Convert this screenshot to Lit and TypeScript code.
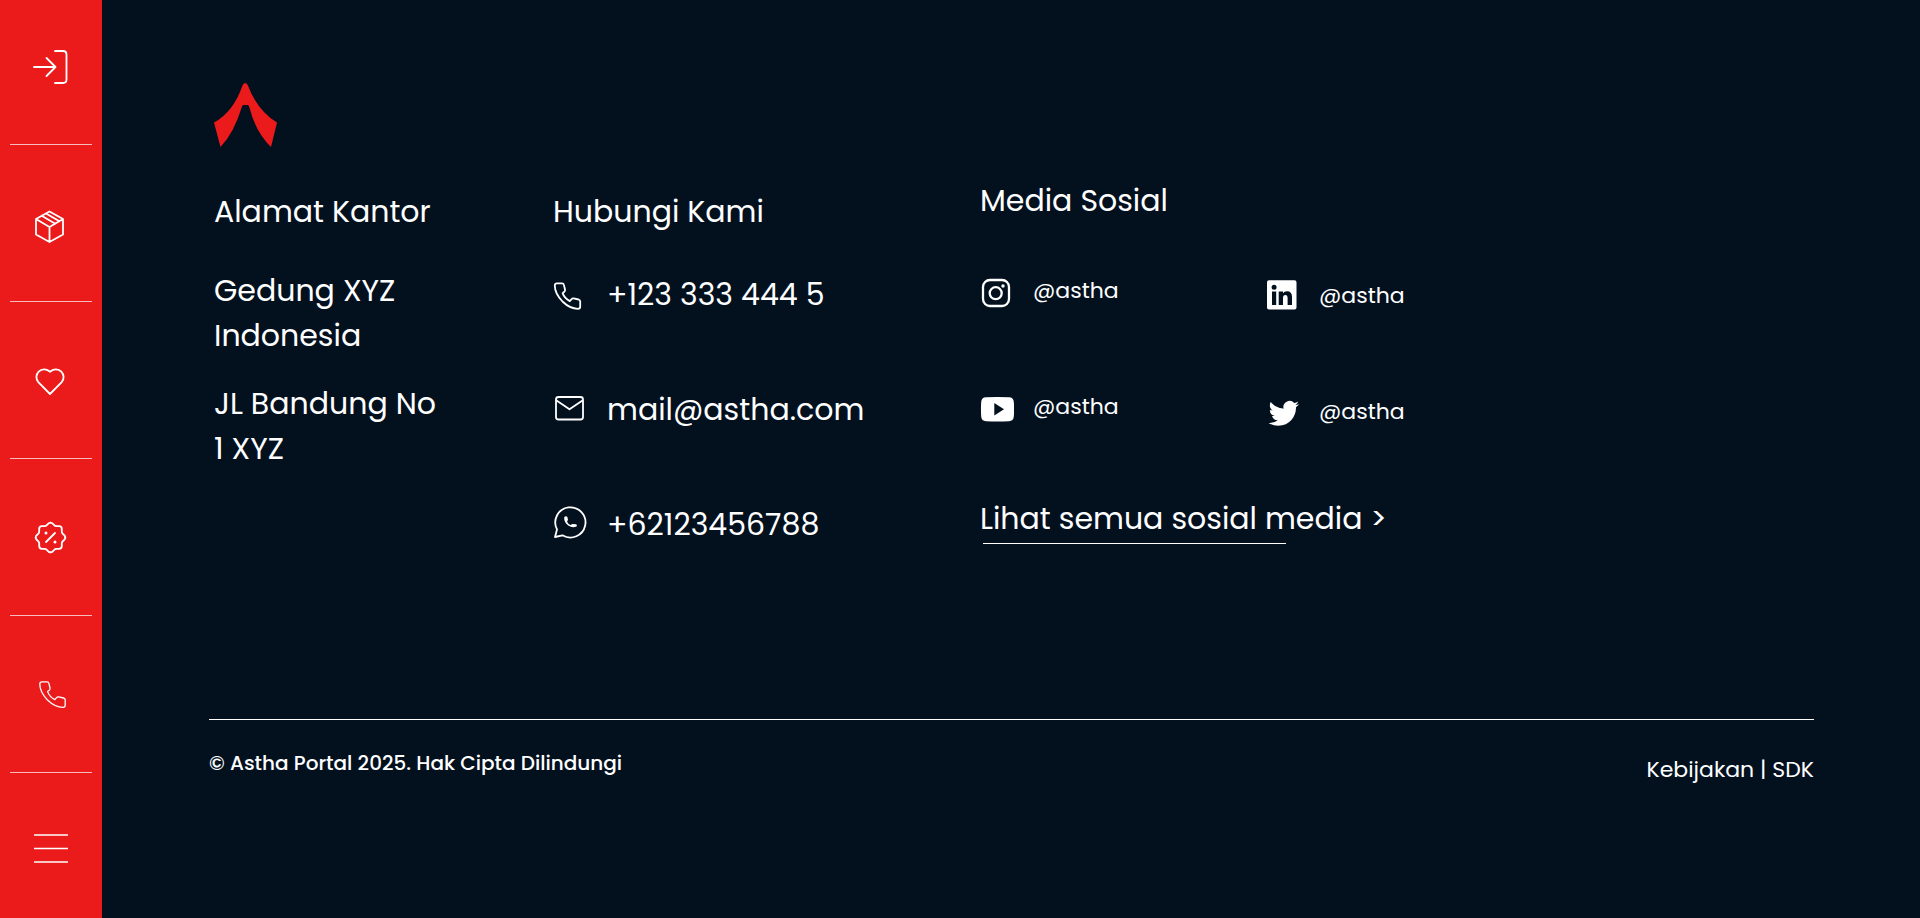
import { LitElement, html, svg, css } from "lit";
import { customElement } from "lit/decorators.js";

const handset = svg`<path d="M3 .8H8Q9.6 .8 9.9 2.4L11 7Q11.3 8.4 10.3 9.2L8.6 10.6Q10.5 15.8 15.8 18.6L17.6 16.6Q18.4 15.7 19.6 15.9L24.6 17Q26.2 17.4 26.2 19V24Q26.2 26.3 24 26.3Q16 26.3 8.5 19Q.8 11 .8 3Q.8 .8 3 .8Z"/>`;

const badgeQuarter =
  "M0-14.8c1 0 1.8.4 2.5 1.2l1.2 1.3c.6.7 1.4 1 2.3 1h2.6c1.6 0 2.7 1.1 2.7 2.7v2.6c0 .9.3 1.7 1 2.3l1.3 1.2c.8.7 1.2 1.5 1.2 2.5";

const menu = [
  {
    label: "Masuk",
    icon: svg`<path d="M28 3H36q3.5 0 3.500 3.500V31.500q0 3.500-3.500 3.500H28M7 19H28.500M19.500 10L28.500 19L19.500 28"/>`,
  },
  {
    label: "Produk",
    icon: svg`<path d="M22.500 12.500L36 20V35.500L22.500 43L9 35.500V20ZM9 20L22.500 28L36 20M22.500 28V43M14.700 16.800L28.200 24.800M19 14.500L32.500 22.200"/>`,
  },
  {
    label: "Favorit",
    icon: svg`<path d="M23 38L11.300 26.200a7.800 7.800 0 0 1 11-11l.7.7 .7-.7a7.800 7.800 0 0 1 11 11z"/>`,
  },
  {
    label: "Promo",
    icon: svg`<g transform="translate(23.500 24.500)">
      ${[0, 90, 180, 270].map((a) => svg`<path transform="rotate(${a})" d=${badgeQuarter} />`)}
      <path d="M-4.500 4.500L4.500-4.500"/>
      <circle class="solid" cx="-4.500" cy="-4.500" r="1.500"/>
      <circle class="solid" cx="4.500" cy="4.500" r="1.500"/>
    </g>`,
  },
  {
    label: "Telepon",
    icon: svg`<g class="thin" transform="translate(12 11)">${handset}</g>`,
  },
];

const contacts = [
  {
    text: "+123 333 444 5",
    href: "tel:+1233334445",
    icon: svg`<g transform="translate(1 10.500)">${handset}</g>`,
  },
  {
    text: "mail@astha.com",
    href: "mailto:mail@astha.com",
    icon: svg`<rect x="3" y="10" width="27" height="22.500" rx="2.500"/><path d="M3.500 13.500L16.500 22.300L29.500 13.500"/>`,
  },
  {
    text: "+62123456788",
    href: "https://wa.me/62123456788",
    icon: svg`<path d="M2 35L4 27.400A15.100 15.100 0 1 1 9.500 33.300Z"/>
      <path class="solid" d="M11.200 15.300q1.600-1.800 3.200-.2l.6 2.900-1 1.400q1 2.600 3.700 3.600l1.600-1 3.900.3q1.300.8.3 2.100-4 2-8.300-.9-4.300-3.200-4-8.200z"/>`,
  },
];

const socialsLeft = [
  {
    name: "Instagram",
    icon: svg`<rect class="bold" x="3" y="7" width="26" height="26" rx="7"/>
      <circle class="bold" cx="15.700" cy="20.200" r="6"/><circle class="solid" cx="23" cy="13" r="1.700"/>`,
  },
  {
    name: "YouTube",
    icon: svg`<path class="solid" fill-rule="evenodd" d="M6 8.300Q17.500 7.500 29 8.300 33.500 8.500 33.800 13 34.500 20 33.800 27.500 33.500 32 29 32.200 17.500 33 6 32.200 1.500 32 1.200 27.500 .7 20 1.200 13 1.500 8.500 6 8.300ZM14.300 14V26.500L24 20.200Z"/>`,
  },
];

const socialsRight = [
  {
    name: "LinkedIn",
    icon: svg`<path class="solid" fill-rule="evenodd" d="M3 2.300H28.500Q30.500 2.300 30.500 4.300V29.500Q30.500 31.500 28.500 31.500H3Q1 31.500 1 29.500V4.300Q1 2.300 3 2.300ZM5.600 9.200a2.500 2.500 0 1 0 5 0a2.500 2.500 0 1 0-5 0ZM6 13.500V27H10.200V13.500ZM12.700 13.500V27H17V20Q17 17 19.300 17T21.600 20V27H26V19Q26 13.200 21 13.200 18.200 13.200 17 15.300V13.500Z"/>`,
  },
  {
    name: "Twitter",
    icon: svg`<path class="solid" transform="translate(2.600 4.100) scale(1.270)" d="M23.953 4.570a10 10 0 01-2.825.775 4.958 4.958 0 002.163-2.723c-.951.555-2.005.959-3.127 1.184a4.920 4.920 0 00-8.384 4.482C7.690 8.095 4.067 6.130 1.640 3.162a4.822 4.822 0 00-.666 2.475c0 1.710.870 3.213 2.188 4.096a4.904 4.904 0 01-2.228-.616v.060a4.923 4.923 0 003.946 4.827 4.996 4.996 0 01-2.212.085 4.936 4.936 0 004.604 3.417 9.867 9.867 0 01-6.102 2.105c-.390 0-.779-.023-1.170-.067a13.995 13.995 0 007.557 2.209c9.053 0 13.998-7.496 13.998-13.985 0-.210 0-.420-.015-.630A9.935 9.935 0 0024 4.590z"/>`,
  },
];

@customElement("app-root")
export class AppRoot extends LitElement {
  static styles = css`
    :host {
      display: grid;
      grid-template-columns: 102px minmax(0, 1fr);
      min-height: 100vh;
      background: #03111f;
      color: #fff;
      font-family: Poppins, Inter, sans-serif;
      font-size: 30px;
      line-height: 45px;
    }
    a {
      color: inherit;
      text-decoration: none;
    }
    h2,
    p {
      margin: 0;
      font-size: inherit;
      font-weight: 400;
    }
    svg {
      display: block;
      flex: none;
      fill: none;
      stroke: #fff;
      stroke-width: 1.8;
      stroke-linecap: round;
      stroke-linejoin: round;
    }
    .solid {
      fill: #fff;
      stroke: none;
    }
    .thin {
      stroke-width: 1.3;
    }
    .bold {
      stroke-width: 2.3;
    }
    .sidebar {
      display: grid;
      grid-template-rows: 145fr repeat(4, 157fr) 145fr;
      padding: 0 10px;
      background: #eb1b1b;
    }
    .item {
      display: grid;
      place-items: center;
      border-bottom: 1px solid rgba(255, 255, 255, 0.7);
    }
    .menu {
      display: grid;
      place-items: center;
      padding: 0;
      border: 0;
      background: none;
      cursor: pointer;
    }
    .menu svg {
      stroke-width: 1.3;
      stroke-linecap: butt;
    }
    .page {
      padding: 83px 106px 48px 107px;
    }
    .logo,
    .columns {
      margin-left: 5px;
    }
    .logo {
      fill: #eb1b1b;
      stroke: none;
    }
    .columns {
      display: grid;
      grid-template-columns: 339fr 427fr 834fr;
      margin-top: 31px;
    }
    .address,
    .contact {
      padding-top: 11px;
    }
    .address p {
      max-width: 232px;
      margin-top: 23px;
    }
    .address h2 + p {
      margin-top: 34px;
    }
    .contacts {
      display: grid;
      gap: 70px;
      margin-top: 38px;
    }
    .row {
      display: flex;
      align-items: flex-start;
      gap: 20px;
      white-space: nowrap;
    }
    .socials {
      display: flex;
      gap: 133px;
    }
    .stack {
      display: grid;
      align-content: start;
      gap: 76px;
      width: 153px;
      padding-top: 51px;
      font-size: 22px;
      line-height: 33px;
    }
    .stack .row {
      gap: 19px;
    }
    .stack.low {
      padding-top: 56px;
    }
    .all {
      display: inline-block;
      margin-top: 61px;
      white-space: nowrap;
    }
    .all::after {
      content: "";
      display: block;
      width: 303px;
      height: 1px;
      margin: 2px 0 0 3px;
      background: #fff;
    }
    .footer {
      display: flex;
      justify-content: space-between;
      margin-top: 172px;
      padding-top: 28px;
      border-top: 1px solid #fff;
    }
    .copyright {
      font-size: 20px;
      font-weight: 500;
      line-height: 30px;
    }
    .legal {
      padding-top: 5px;
      font-size: 22px;
      line-height: 33px;
    }
  `;

  private social(s: { name: string; icon: unknown }) {
    return html`<a class="row" href="#" aria-label=${s.name}>
      <svg width="34" height="40" viewBox="0 1 34 40" aria-hidden="true">${s.icon}</svg>
      <span>@astha</span>
    </a>`;
  }

  render() {
    return html`
      <nav class="sidebar">
        ${menu.map(
          (m) => html`<a class="item" href="#" aria-label=${m.label}>
            <svg width="48" height="48" viewBox="0 0 48 48" aria-hidden="true">${m.icon}</svg>
          </a>`
        )}
        <button class="menu" aria-label="Menu">
          <svg width="48" height="48" viewBox="0 0 48 48" aria-hidden="true">
            <path d="M7 13H41M7 26.500H41M7 40H41" />
          </svg>
        </button>
      </nav>
      <main class="page">
        <svg class="logo" width="64" height="64" viewBox="0 0 64 64" aria-hidden="true">
          <path
            d="M28.700 2Q31.200-2 33.700 2Q43.500 28 63 39.500L57 64Q41.500 49 35.300 24Q34.800 22 33.500 22H29.500Q28.300 22 27.800 24Q20 50 6.500 64L0 39.500Q19.500 29 28.700 2Z"
          />
        </svg>
        <div class="columns">
          <section class="address">
            <h2>Alamat Kantor</h2>
            <p>Gedung XYZ Indonesia</p>
            <p>JL Bandung No 1 XYZ</p>
          </section>
          <section class="contact">
            <h2>Hubungi Kami</h2>
            <div class="contacts">
              ${contacts.map(
                (c) => html`<a class="row" href=${c.href}>
                  <svg width="34" height="45" viewBox="0 0 34 45" aria-hidden="true">${c.icon}</svg>
                  <span>${c.text}</span>
                </a>`
              )}
            </div>
          </section>
          <section>
            <h2>Media Sosial</h2>
            <div class="socials">
              <div class="stack">${socialsLeft.map((s) => this.social(s))}</div>
              <div class="stack low">${socialsRight.map((s) => this.social(s))}</div>
            </div>
            <a class="all" href="#">Lihat semua sosial media &gt;</a>
          </section>
        </div>
        <footer class="footer">
          <p class="copyright">© Astha Portal 2025. Hak Cipta Dilindungi</p>
          <p class="legal"><a href="#">Kebijakan</a> | <a href="#">SDK</a></p>
        </footer>
      </main>
    `;
  }
}
